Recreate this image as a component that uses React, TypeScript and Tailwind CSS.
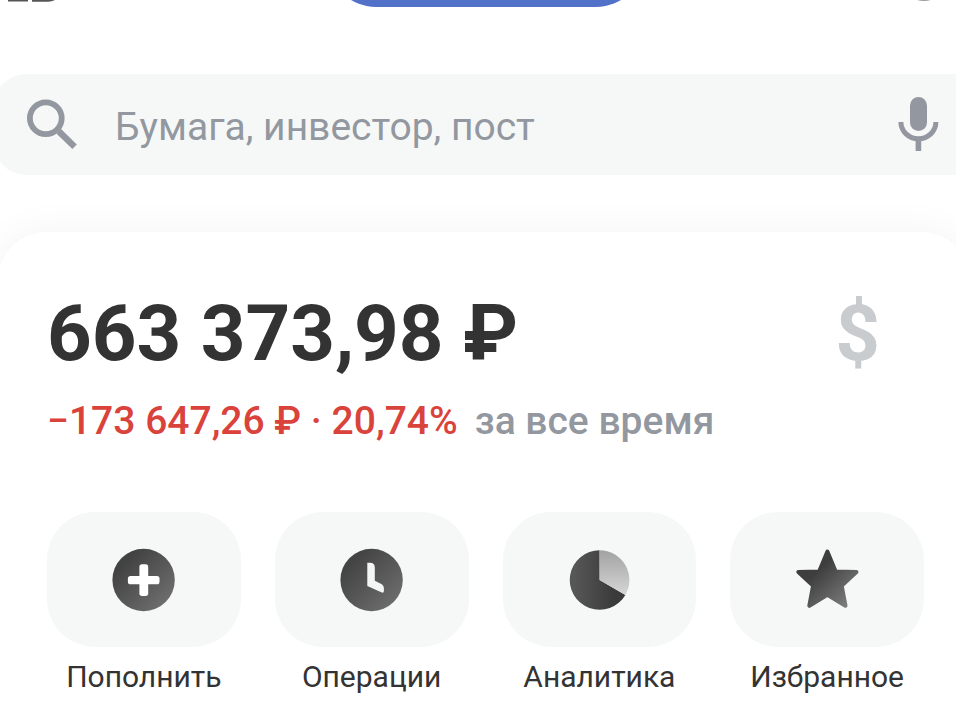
import { useState } from "react";
import type { ReactNode } from "react";

interface ActionProps {
  label: string;
  icon: ReactNode;
}

function SearchIcon() {
  return (
    <svg width="52" height="52" viewBox="0 0 52 52" fill="none" stroke="#9398a0" strokeWidth="5.8" className="shrink-0" aria-hidden="true">
      <circle cx="19.8" cy="19.2" r="15.9" />
      <path d="M32.8 32.4L48.6 47.8" strokeWidth="6.4" />
    </svg>
  );
}

function MicIcon() {
  return (
    <svg width="41" height="56" viewBox="0 0 41 56" fill="#9398a0" aria-hidden="true">
      <rect x="12" y="0" width="17" height="34" rx="8.5" />
      <path d="M2.9 25a17.5 16.8 0 0 0 35 0" fill="none" stroke="#9398a0" strokeWidth="5" />
      <rect x="17.6" y="42" width="5.6" height="12" />
    </svg>
  );
}

function PlusIcon() {
  return (
    <svg width="64" height="64" viewBox="0 0 64 64" aria-hidden="true">
      <linearGradient id="plus-fill" x1="0" y1="0" x2="1" y2="1">
        <stop offset="0.2" stopColor="#424242" />
        <stop offset="1" stopColor="#767676" />
      </linearGradient>
      <circle cx="31.6" cy="32" r="31.2" fill="url(#plus-fill)" />
      <rect x="27.4" y="16.3" width="8.8" height="31.6" rx="2.6" fill="#fff" />
      <rect x="15.9" y="27.9" width="31.6" height="8.4" rx="2.6" fill="#fff" />
    </svg>
  );
}

function ClockIcon() {
  return (
    <svg width="64" height="64" viewBox="0 0 64 64" aria-hidden="true">
      <linearGradient id="clock-fill" x1="0" y1="0" x2="1" y2="1">
        <stop offset="0.2" stopColor="#444444" />
        <stop offset="1" stopColor="#747474" />
      </linearGradient>
      <circle cx="31.6" cy="32" r="31.2" fill="url(#clock-fill)" />
      <path d="M27.3 14.8h2.6q4.9 0 4.9 4.6v13.4l6 2.9q3.1 1.5 3.1 4.6v2.4q0 2.8-2.6 1.6l-14-6.4z" fill="#f4f6f6" />
    </svg>
  );
}

function PieIcon() {
  return (
    <svg width="64" height="64" viewBox="0 0 64 64" aria-hidden="true">
      <linearGradient id="pie-fill" x1="0" y1="0" x2="1" y2="0">
        <stop offset="0.1" stopColor="#565656" />
        <stop offset="0.8" stopColor="#3a3a3a" />
      </linearGradient>
      <linearGradient id="slice-fill" x1="0" y1="0" x2="0" y2="1">
        <stop offset="0" stopColor="#a2a2a2" />
        <stop offset="1" stopColor="#d6d6d6" />
      </linearGradient>
      <path d="M32.6 32V2.2a29.8 29.8 0 1 0 25.8 44.7z" fill="url(#pie-fill)" />
      <path d="M32.6 32V2.2a29.8 29.8 0 0 1 25.8 44.7z" fill="url(#slice-fill)" />
    </svg>
  );
}

function StarIcon() {
  return (
    <svg width="64" height="64" viewBox="0 0 64 64" aria-hidden="true">
      <linearGradient id="star-fill" x1="0.1" y1="0.1" x2="0.9" y2="0.9">
        <stop offset="0.3" stopColor="#3e3e3e" />
        <stop offset="1" stopColor="#7a7a7a" />
      </linearGradient>
      <path
        d="M32.4 3.8L40.7 23.7L61.4 24L46.6 37.6L50.4 57.7L32.4 46.8L14.4 57.7L18.2 37.6L3.4 24L24.1 23.7z"
        fill="url(#star-fill)"
        stroke="url(#star-fill)"
        strokeWidth="4.2"
        strokeLinejoin="round"
      />
    </svg>
  );
}

const actions: ActionProps[] = [
  { label: "Пополнить", icon: <PlusIcon /> },
  { label: "Операции", icon: <ClockIcon /> },
  { label: "Аналитика", icon: <PieIcon /> },
  { label: "Избранное", icon: <StarIcon /> },
];

function Action({ label, icon }: ActionProps) {
  return (
    <button type="button" className="flex flex-col items-center gap-3">
      <span className="flex h-[135px] w-full items-center justify-center rounded-[48px] bg-[#f6f8f8]">{icon}</span>
      <span className="text-[30px] leading-9 text-[#333333]">{label}</span>
    </button>
  );
}

// Only the lower edge of the header is on screen
function Header() {
  return (
    <header className="-mr-2 grid h-[7px] grid-cols-[1fr_auto_1fr] content-end items-end overflow-hidden pl-2">
      <svg width="50" height="7" viewBox="0 0 50 7" fill="#555555" aria-hidden="true">
        <path d="M0 0h20v1.5H0zM24 0h23q-3 1.8-7 1.8H24z" />
      </svg>
      <button type="button" aria-label="Счёт" className="h-24 w-[316px] rounded-full bg-[#5272c9]" />
      <svg width="80" height="7" viewBox="0 0 80 7" className="justify-self-end" aria-hidden="true">
        <circle cx="40" cy="-22" r="23" fill="#9a9a9a" />
      </svg>
    </header>
  );
}

export default function App() {
  const [query, setQuery] = useState("");

  return (
    <div className="overflow-hidden bg-white font-['Roboto','Noto_Sans',sans-serif]">
      <Header />

      <form role="search" className="-ml-1.5 mt-[67px] flex h-[101px] items-center rounded-l-[32px] bg-[#f6f8f8] pl-8 pr-[17px]">
        <SearchIcon />
        <input
          type="text"
          aria-label="Поиск"
          placeholder="Бумага, инвестор, пост"
          value={query}
          onChange={(e) => setQuery(e.target.value)}
          className="ml-[37px] min-w-0 flex-1 bg-transparent pt-1 text-[39px] leading-[48px] text-[#333333] outline-none placeholder:text-[#9398a0]"
        />
        <button type="button" aria-label="Голосовой ввод">
          <MicIcon />
        </button>
      </form>

      <main className="-ml-0.5 -mr-3.5 mt-[57px] rounded-t-[48px] bg-white pb-6 pl-[49px] pr-[46px] pt-14 shadow-[0_0_40px_rgba(0,0,0,0.05)]">
        <div className="flex items-center justify-between pr-11">
          <h1 className="text-[78px] font-bold leading-[92px] text-[#333333]">663 373,98 ₽</h1>
          <button type="button" aria-label="Показать в долларах" className="text-[78px] font-bold leading-[92px] text-[#c9cccf]">
            $
          </button>
        </div>
        <p className="mt-[17px] flex gap-[17px] text-[39px] font-medium leading-[48px]">
          <span className="text-[#d9433b]">−173 647,26 ₽ · 20,74%</span>
          <span className="text-[#9398a0]">за все время</span>
        </p>
        <div className="mt-[67px] grid grid-cols-4 gap-[34px]">
          {actions.map((action) => (
            <Action key={action.label} {...action} />
          ))}
        </div>
      </main>
    </div>
  );
}
